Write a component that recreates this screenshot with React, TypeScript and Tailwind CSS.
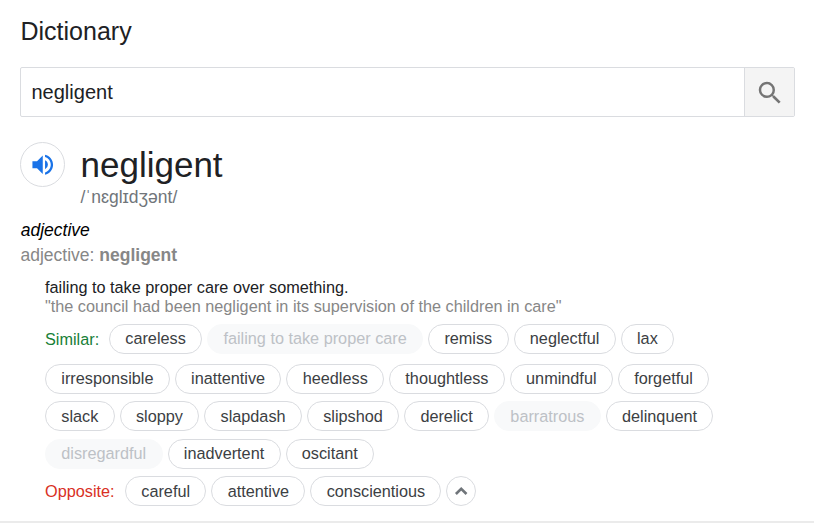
type Word = { text: string; faded?: boolean };

function Pill({ text, faded, raised }: Word & { raised?: boolean }) {
  const tone = faded ? 'border-[#f8f9fa] bg-[#f8f9fa] text-[#bdc1c6]' : 'border-[#dadce0] bg-white text-[#3c4043]';
  const lift = raised ? 'pb-[2px] leading-[26px]' : 'leading-[28px]';
  return (
    <span className={`block h-[30px] rounded-full border px-[15.3px] whitespace-nowrap ${tone} ${lift}`}>{text}</span>
  );
}

function Pills({ words, raised }: { words: Word[]; raised?: boolean }) {
  return (
    <>
      {words.map((w) => (
        <Pill key={w.text} text={w.text} faded={w.faded} raised={raised} />
      ))}
    </>
  );
}

const row1: Word[] = [
  { text: 'careless' },
  { text: 'failing to take proper care', faded: true },
  { text: 'remiss' },
  { text: 'neglectful' },
  { text: 'lax' },
];
const row2: Word[] = [
  { text: 'irresponsible' },
  { text: 'inattentive' },
  { text: 'heedless' },
  { text: 'thoughtless' },
  { text: 'unmindful' },
  { text: 'forgetful' },
];
const row3: Word[] = [
  { text: 'slack' },
  { text: 'sloppy' },
  { text: 'slapdash' },
  { text: 'slipshod' },
  { text: 'derelict' },
  { text: 'barratrous', faded: true },
  { text: 'delinquent' },
];
const row4: Word[] = [{ text: 'disregardful', faded: true }, { text: 'inadvertent' }, { text: 'oscitant' }];
const opposites: Word[] = [{ text: 'careful' }, { text: 'attentive' }, { text: 'conscientious' }];

export default function App() {
  return (
    <div className="flex h-[524px] w-[814px] flex-col overflow-hidden bg-white font-['Liberation_Sans',Arial,sans-serif] text-[16.25px] text-[#202124]">
      <h1 className="mt-[16px] ml-[20.5px] h-[31px] text-[25px] leading-[30px]">Dictionary</h1>

      <div className="mt-[20px] ml-[20px] flex h-[50px] w-[775px] overflow-hidden rounded-[2px] border border-[#dadce0]">
        <div className="flex-1 pl-[10.5px] text-[20px] leading-[48px]">negligent</div>
        <div className="flex w-[50px] items-center justify-center border-l border-[#dadce0] bg-[#f4f4f4]">
          <svg className="mt-px" width="30" height="30" viewBox="0 0 24 24" fill="#757575">
            <path d="M15.5 14h-.79l-.28-.27A6.471 6.471 0 0 0 16 9.5 6.5 6.5 0 1 0 9.5 16c1.61 0 3.09-.59 4.23-1.57l.27.28v.79l5 4.99L20.49 19l-4.99-5zm-6 0C7.01 14 5 11.99 5 9.5S7.01 5 9.5 5 14 7.01 14 9.5 11.99 14 9.5 14z" />
          </svg>
        </div>
      </div>

      <div className="mt-[25px] ml-[20px] flex h-[66px]">
        <div className="flex h-[45px] w-[45px] items-center justify-center rounded-full border border-[#dadce0]">
          <svg width="27.5" height="27.5" viewBox="0 0 24 24" fill="#1a73e8">
            <path d="M3 9v6h4l5 5V4L7 9H3zm13.5 3A4.5 4.5 0 0 0 14 7.97v8.05A4.5 4.5 0 0 0 16.5 12zM14 3.23v2.06c2.89.86 5 3.54 5 6.71s-2.11 5.85-5 6.71v2.06c4.01-.91 7-4.49 7-8.77s-2.99-7.86-7-8.77z" />
          </svg>
        </div>
        <div className="ml-[15.5px]">
          <div className="h-[44px] text-[35px] leading-[46px]">negligent</div>
          <div className="text-[17.5px] leading-[22px] text-[#70757a]">/ˈnɛɡlɪdʒənt/</div>
        </div>
      </div>

      <div className="mt-[10px] ml-[20.75px] h-[24px] text-[17.5px] leading-[24px] text-black italic">adjective</div>
      <div className="ml-[20.5px] h-[26px] text-[17.5px] leading-[26px] text-[#878787]">
        adjective: <b>negligent</b>
      </div>

      <div className="mt-[10px] ml-[45px] flex flex-col">
        <div className="h-[19px] leading-[19px] text-[#202124]">failing to take proper care over something.</div>
        <div className="h-[19px] leading-[19px] text-[#878787]">
          "the council had been negligent in its supervision of the children in care"
        </div>
        <div className="mt-[8px] flex gap-[5px]">
          <span className="w-[59px] leading-[30px] whitespace-nowrap text-[#188038]">Similar:</span>
          <Pills words={row1} raised />
        </div>
        <div className="mt-[10px] flex gap-[5px]">
          <Pills words={row2} raised />
        </div>
        <div className="mt-[7px] flex gap-[5px]">
          <Pills words={row3} />
        </div>
        <div className="mt-[8px] flex gap-[5px]">
          <Pills words={row4} raised />
        </div>
        <div className="mt-[7px] flex gap-[5px]">
          <span className="w-[75px] leading-[30px] whitespace-nowrap text-[#d93025]">Opposite:</span>
          <Pills words={opposites} />
          <span className="flex h-[30px] w-[30px] items-center justify-center rounded-full border border-[#dadce0]">
            <svg width="14" height="14" viewBox="0 0 14 14" fill="none" stroke="#70757a" strokeWidth="2.6">
              <path d="M1.9 10L7.2 4.8l5.3 5.2" />
            </svg>
          </span>
        </div>
      </div>
      <div className="mt-[15px] h-[2px] shrink-0 bg-[#ebebeb]" />
    </div>
  );
}
